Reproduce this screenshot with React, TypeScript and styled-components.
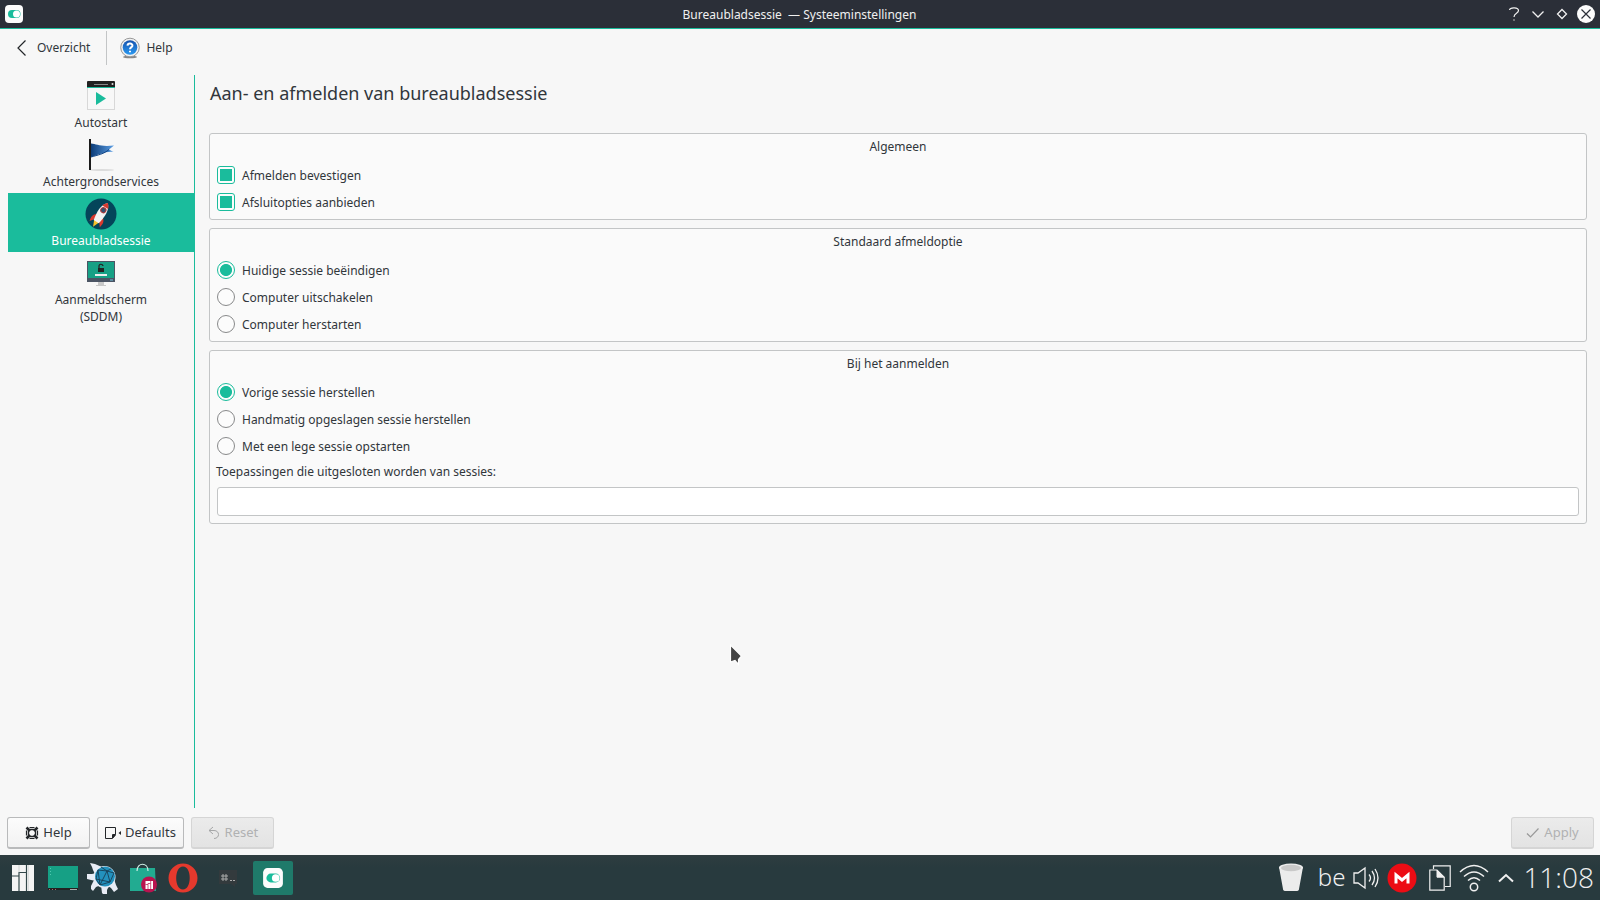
import React, { useState } from 'react';
import styled, { createGlobalStyle, css } from 'styled-components';

const accent = '#1abc9c';
const ink = '#31363b';

const GlobalStyle = createGlobalStyle`
  * { box-sizing: border-box; }
  body {
    margin: 0;
    background: #f7f7f7;
    color: ${ink};
    font: 12px/17px "Noto Sans", "Open Sans", sans-serif;
  }
  button, input { font: inherit; color: inherit; }
`;

const Desktop = styled.div`
  min-height: 100vh;
  display: flex;
  flex-direction: column;
`;

const TitleBar = styled.header`
  height: 29px;
  padding: 0 5px 0 4px;
  display: grid;
  grid-template-columns: 1fr auto 1fr;
  align-items: center;
  background: #2b2f38;
  color: #f0f0f0;
  border-bottom: 1px solid ${accent};
`;

const WindowTitle = styled.h1`
  margin: 0;
  font-size: 12px;
  font-weight: 400;
  white-space: pre;
`;

const WindowButtons = styled.div`
  display: flex;
  justify-content: flex-end;
  gap: 6px;
`;

const IconButton = styled.button`
  display: flex;
  width: 18px;
  height: 18px;
  padding: 0;
  border: 0;
  background: none;
`;

const ToolBar = styled.nav`
  height: 46px;
  padding: 1px 0 10px 16px;
  display: flex;
  align-items: center;
`;

const ToolButton = styled.button`
  height: 35px;
  padding: 0 16px 0 0;
  display: flex;
  align-items: center;
  gap: 6px;
  border: 0;
  background: none;
`;

const ToolSeparator = styled.span`
  width: 1px;
  height: 34px;
  margin-right: 13px;
  background: #c3c5c6;
`;

const Main = styled.div`
  flex: 1;
  display: flex;
`;

const SideBar = styled.nav`
  flex: 0 0 195px;
  padding-left: 8px;
  border-right: 1px solid ${accent};
`;

const SideItem = styled.a<{ $active?: boolean }>`
  min-height: 59px;
  padding: 5px 32px 3px;
  display: flex;
  flex-direction: column;
  align-items: center;
  gap: 2px;
  text-align: center;
  text-decoration: none;
  color: ${p => (p.$active ? '#fff' : ink)};
  background: ${p => (p.$active ? accent : 'transparent')};
`;

const Content = styled.main`
  flex: 1;
  padding: 0 13px 0 14px;
  display: flex;
  flex-direction: column;
  gap: 8px;
`;

const PageTitle = styled.h2`
  margin: 0;
  padding: 6px 0 20px 1px;
  font-size: 18px;
  line-height: 24px;
  font-weight: 400;
`;

const Group = styled.section<{ $roomy?: boolean }>`
  padding: 0 7px ${p => (p.$roomy ? 7 : 3)}px;
  border: 1px solid #c3c5c6;
  border-radius: 3px;
  background: #fafafa;
`;

const GroupTitle = styled.h3`
  margin: 0;
  height: 28px;
  font-size: 12px;
  line-height: 25px;
  font-weight: 400;
  text-align: center;
`;

const OptionRow = styled.label`
  height: 27px;
  padding-bottom: 1px;
  display: flex;
  align-items: center;
  gap: 7px;
`;

const Tick = styled.input`
  appearance: none;
  width: 18px;
  height: 18px;
  margin: 0;
  border: 1px solid #88898a;
  border-radius: ${p => (p.type === 'radio' ? '50%' : '3px')};
  background: #fcfcfc;
  ${p => css`
    &:checked {
      border-color: ${accent};
      background: ${p.type === 'radio'
        ? `radial-gradient(circle, ${accent} 5.6px, #fcfcfc 6.4px)`
        : `linear-gradient(${accent}, ${accent}) center / 12px 12px no-repeat #fcfcfc`};
    }
  `}
`;

const FieldLabel = styled.label`
  display: block;
  height: 24px;
  margin: 0 0 3px -1px;
  line-height: 24px;
`;

const TextField = styled.input`
  display: block;
  width: 100%;
  height: 29px;
  padding: 0 6px;
  border: 1px solid #c3c5c6;
  border-radius: 3px;
  background: #fff;
`;

const ActionBar = styled.footer`
  height: 47px;
  padding: 9px 6px 6px 7px;
  display: flex;
  gap: 7px;
`;

const PushButton = styled.button<{ $end?: boolean }>`
  height: 32px;
  min-width: 83px;
  padding: 0 7px;
  display: flex;
  align-items: center;
  justify-content: center;
  gap: 4px;
  margin-left: ${p => (p.$end ? 'auto' : '0')};
  border: 1px solid #b9babb;
  border-bottom-width: 2px;
  border-radius: 3px;
  background: linear-gradient(#fcfcfc, #f2f2f2);
  font-size: 13px;
  &:disabled {
    color: #b0b1b2;
    border-color: #d5d5d5;
    background: linear-gradient(#ebebeb, #e3e3e3);
  }
`;

const TaskBar = styled.footer`
  height: 45px;
  padding: 0 6px 0 3px;
  display: flex;
  align-items: center;
  justify-content: space-between;
  background: linear-gradient(#2f3d40, #283a3e 12px);
  color: #f0f0f0;
`;

const TaskList = styled.div`
  display: flex;
  align-items: center;
`;

const TaskButton = styled.button<{ $active?: boolean; $wide?: boolean }>`
  width: ${p => (p.$wide ? 50 : 40)}px;
  height: 34px;
  padding: 0;
  display: flex;
  align-items: center;
  justify-content: center;
  border: 0;
  border-radius: 2px;
  background: ${p => (p.$active ? '#1f7a6a' : 'transparent')};
`;

const Tray = styled.div`
  display: flex;
  align-items: center;
  gap: 8px;
`;

const Keyboard = styled.span`
  padding: 0 0 2px 6px;
  font: 350 24px/32px "Noto Sans", "Open Sans", sans-serif;
`;

const Clock = styled.time`
  padding-bottom: 2px;
  font: 350 28px/32px "Open Sans", "Noto Sans", sans-serif;
`;

const Pointer = styled.svg`
  position: absolute;
  left: 729px;
  top: 643px;
  pointer-events: none;
`;

const ToggleLogo = ({ size }: { size: number }) => (
  <svg width={size} height={size} viewBox="0 0 20 20">
    <rect x="1" y="1" width="18" height="18" rx="4" fill="#fcfcfc" />
    <rect x="4" y="6" width="12.500" height="8" rx="4" fill={accent} />
    <circle cx="12.500" cy="10" r="3.500" fill="#fff" />
  </svg>
);

const HelpBadge = () => (
  <svg width="20" height="22" viewBox="0 0 20 22">
    <defs>
      <linearGradient id="hb" x1="0" y1="0" x2="0" y2="1">
        <stop offset="0" stopColor="#1552ad" />
        <stop offset="1" stopColor="#2b9af2" />
      </linearGradient>
    </defs>
    <ellipse cx="10" cy="20" rx="7" ry="1.300" fill="#888" />
    <circle cx="10" cy="10.500" r="9.300" fill="#f1f1f1" stroke="#999" strokeWidth="1" />
    <circle cx="10" cy="10.500" r="7.300" fill="url(#hb)" />
    <path d="M7.500 8.600C7.700 5.800 12.800 6 12.400 8.800C12.200 10.200 10 10.200 10 12.300M10 13.700V15.300" fill="none" stroke="#fff" strokeWidth="2" />
  </svg>
);

const AutostartIcon = () => (
  <svg width="32" height="32" viewBox="0 0 32 32">
    <rect x="2.500" y="2.500" width="27" height="27" fill="#f8f8f8" stroke="#d8d8d8" />
    <path d="M2 2q0-1 1-1h26q1 0 1 1v5H2z" fill="#222" />
    <path d="M2 7.500h28" stroke={accent} />
    <path d="M9 4.500h14" stroke="#888" />
    <circle cx="27.500" cy="4" r="1" fill="#ddd" />
    <path d="M11 12l10 6.500L11 25z" fill={accent} />
  </svg>
);

const FlagIcon = () => (
  <svg width="32" height="32" viewBox="0 0 32 32">
    <defs>
      <linearGradient id="fl" x1="0" x2="1">
        <stop offset="0" stopColor="#0c3c78" />
        <stop offset="1" stopColor="#5b9fe6" />
      </linearGradient>
    </defs>
    <ellipse cx="17" cy="31" rx="12" ry="1" fill="#dcdcdc" />
    <path d="M5 0v31" stroke="#1b1b1b" strokeWidth="2" />
    <path d="M6 4.500C12 5 15 8 29 6.500L24 10.500L28.500 13C20 12 14 16 6 18z" fill="url(#fl)" />
    <path d="M6 18C13 16 19 15 24 10.500" fill="none" stroke="#0f4384" />
  </svg>
);

const RocketIcon = () => (
  <svg width="32" height="32" viewBox="0 0 32 32">
    <circle cx="16" cy="16" r="15.500" fill="#04455a" />
    <g transform="translate(16 16) rotate(32)">
      <path d="M-3 8L0 15L3 8z" fill="#f7c32b" />
      <path d="M-3 2C-7 4-7 8-6 12L-3 8zM3 2C7 4 7 8 6 12L3 8z" fill="#d8392f" />
      <path d="M0-13C5-8 5 0 3 9H-3C-5 0-5-8 0-13z" fill="#f3f3f3" />
      <path d="M0-13C2-11 3-9.500 3.400-8H-3.400C-3-9.500-2-11 0-13z" fill="#d8392f" />
      <circle cy="-4.500" r="2.600" fill="#34506e" stroke="#b0393c" strokeWidth="1" />
    </g>
  </svg>
);

const LoginIcon = () => (
  <svg width="32" height="32" viewBox="0 0 32 32">
    <rect x="2" y="4" width="28" height="21" fill="#4b5564" />
    <rect x="3" y="5" width="26" height="16" fill="#16a085" />
    <path d="M14 12V9.500a2 2 0 0 1 4-.5" fill="none" stroke="#222" strokeWidth="1.200" />
    <rect x="13" y="11" width="6" height="4" fill="#222" />
    <rect x="10" y="17" width="12" height="2" fill="#eee" />
    <path d="M25 23h3" stroke="#6fc3e0" />
    <path d="M13 25h6v3h2v1H11v-1h2z" fill="#c8c8c8" />
  </svg>
);

const LifeRing = () => (
  <svg width="14" height="14" viewBox="0 0 14 14" fill="none" stroke="#232629">
    <rect x="3.500" y="3.500" width="7" height="7" rx="2" strokeWidth="1.400" />
    <path d="M1.500 1.500L5 5M12.500 1.500L9 5M1.500 12.500L5 9M12.500 12.500L9 9" strokeWidth="2.600" />
    <path d="M4.500 1.500h5M4.500 12.500h5M1.500 4.500v5M12.500 4.500v5" strokeWidth="1.200" />
  </svg>
);

const DefaultsIcon = () => (
  <svg width="16" height="14" viewBox="0 0 16 14">
    <path d="M.5 1.500h10v7l-3 4h-7zM7.500 12v-3.500h3" fill="none" stroke="#232629" />
    <path d="M8 9h3l-3 3zM16 5v4l-2.500-2z" fill="#232629" />
  </svg>
);

const UndoIcon = () => (
  <svg width="14" height="14" viewBox="0 0 14 14" fill="none" stroke="#a5a6a7">
    <path d="M6 1L2 4.500L6 8M2 4.500h5c6 0 6 8 0 8" />
  </svg>
);

const CheckIcon = () => (
  <svg width="14" height="14" viewBox="0 0 14 14" fill="none" stroke="#999" strokeWidth="1.200">
    <path d="M1 7.500l3.500 3.500L12.500 2.500" />
  </svg>
);

const ManjaroIcon = () => (
  <svg width="24" height="28" viewBox="0 0 24 28">
    <path d="M1 1h22v26H1z" fill="#f4f4f4" />
    <path d="M1 12h7M8 27V8.500h7.500M15.500 1v26" fill="none" stroke="#33484a" strokeWidth="1.200" />
    <path d="M8 1v7.500" stroke="#b5bcbc" strokeWidth="0.600" />
    <path d="M17.500 1v26" stroke="#c9cfcf" strokeWidth="0.600" />
  </svg>
);

const DesktopIcon = () => (
  <svg width="32" height="26" viewBox="0 0 32 26">
    <rect x="1" y="1" width="30" height="22" fill="#16a085" />
    <rect x="1" y="23" width="30" height="2" fill="#222" />
    <path d="M2 24.500h7" stroke="#a66" strokeDasharray="1 2" />
    <path d="M23 24.500h7" stroke="#aaa" />
    <path d="M3.500 3v7" stroke="#4fc9b0" strokeDasharray="1 2" />
  </svg>
);

const GearGlobeIcon = () => (
  <svg width="32" height="32" viewBox="0 0 32 32">
    <g fill="#e8ecf5">
      <circle cx="17.500" cy="15" r="11" />
      <path d="M3 1l5 1 7 3-7 7-2-4-1-3zM0 12h5l4-1v8l-5-1-4-1zM4 24l4-8 6 7-5 2-3 4-2-2zM15 31l-1-8 8 1-2 4v4h-4zM24 26l-3-2 6-7 2 6 2 4-4 3z" />
    </g>
    <circle cx="18" cy="14.500" r="10" fill="#2391bd" />
    <path d="M11 8l9 1 7 2-4 9-10 3-4-6zM11 8l2 15M20 9l-7 14M20 9l3 11-14-3M14 5l6 4 4-2" fill="none" stroke="#173e56" strokeWidth="0.900" />
  </svg>
);

const BagIcon = () => (
  <svg width="28" height="30" viewBox="0 0 28 30">
    <path d="M1 5h25l1 23H1z" fill="#22ab91" />
    <path d="M8 8C8-1 19-1 19 8" fill="none" stroke="#cfeee6" strokeWidth="1.200" />
    <circle cx="20" cy="21.500" r="8" fill="#b9134f" />
    <path d="M16.500 18H24v8h-7.500z" fill="#fff" />
    <path d="M16.500 21.500h2.500M19 26v-5.500h2.500M21.700 18v8" fill="none" stroke="#b9134f" strokeWidth="0.700" />
  </svg>
);

const OperaIcon = () => (
  <svg width="30" height="30" viewBox="0 0 30 30">
    <path fillRule="evenodd" d="M15 .5a14.500 14.500 0 1 0 0 29a14.500 14.500 0 1 0 0-29zM15 3.500c9 0 9 23 0 23s-9-23 0-23z" fill="#e5392d" />
  </svg>
);

const TerminalIcon = () => (
  <svg width="20" height="20" viewBox="0 0 20 20">
    <path d="M1 2h18v14h-2v3l-4-3H1z" fill="#333a3d" />
    <path d="M5 6v7M8 6v7M3 8h7M3 11h7M12 12.500h2M15 12.500h2" stroke="#aaa" fill="none" />
  </svg>
);

const TrashIcon = () => (
  <svg width="26" height="30" viewBox="0 0 26 30">
    <path d="M1 4l4 22q0 2 3 2h10q3 0 3-2L25 4z" fill="#ececec" />
    <ellipse cx="13" cy="4.500" rx="12" ry="4" fill="#ececec" />
    <ellipse cx="13" cy="5" rx="10" ry="3.200" fill="#c9c9c9" />
  </svg>
);

const VolumeIcon = () => (
  <svg width="26" height="24" viewBox="0 0 26 24" fill="none" stroke="#f0f0f0" strokeWidth="1.300">
    <path d="M1 7h4l7-5v20l-7-5H1zM16 8.500q3 3.500 0 7M19 5q5 7 0 14M22 3q6 9 0 18" />
  </svg>
);

const MegaIcon = () => (
  <svg width="30" height="30" viewBox="0 0 30 30">
    <circle cx="15" cy="15" r="14.500" fill="#ec0c14" />
    <path d="M9 20.500V12l6 5 6-5v8.500" fill="none" stroke="#fff" strokeWidth="3" />
  </svg>
);

const ClipboardIcon = () => (
  <svg width="26" height="26" viewBox="-4 0 26 26" fill="none" stroke="#f0f0f0">
    <path d="M4.500 4V.8h16.700V21.500H16M.8 5h7.200l7.200 7.200V25.200H.8z" strokeWidth="1.200" />
    <path d="M8 5l7.200 7.200H8z" fill="#f0f0f0" />
  </svg>
);

const WifiIcon = () => (
  <svg width="30" height="28" viewBox="0 0 30 28" fill="none" stroke="#f0f0f0" strokeWidth="1.500">
    <circle cx="15" cy="23" r="3.700" />
    <path d="M1 8q14-13 28 0M5 12.500q10-9 20 0M9 16.500q6-5.500 12 0" />
  </svg>
);

const sideItems = [
  { label: 'Autostart', icon: <AutostartIcon /> },
  { label: 'Achtergrondservices', icon: <FlagIcon /> },
  { label: 'Bureaubladsessie', icon: <RocketIcon />, active: true },
  { label: 'Aanmeldscherm (SDDM)', icon: <LoginIcon /> },
];

const tasks = [
  { label: 'Menu', icon: <ManjaroIcon /> },
  { label: 'Bureaublad', icon: <DesktopIcon /> },
  { label: 'Browser', icon: <GearGlobeIcon /> },
  { label: 'Software', icon: <BagIcon /> },
  { label: 'Opera', icon: <OperaIcon /> },
  { label: 'Terminal', icon: <TerminalIcon />, wide: true },
];

function RadioGroup({ name, options }: { name: string; options: string[] }) {
  const [value, setValue] = useState(options[0]);
  return (
    <>
      {options.map(option => (
        <OptionRow key={option}>
          <Tick type="radio" name={name} checked={value === option} onChange={() => setValue(option)} />
          {option}
        </OptionRow>
      ))}
    </>
  );
}

export default function App() {
  return (
    <Desktop>
      <GlobalStyle />
      <TitleBar>
        <ToggleLogo size={20} />
        <WindowTitle>{'Bureaubladsessie  — Systeeminstellingen'}</WindowTitle>
        <WindowButtons>
          <IconButton aria-label="Help">
            <svg width="18" height="18" viewBox="0 0 18 18" fill="none" stroke="#f0f0f0">
              <path d="M4.500 5C5 2 13.500 2 13.500 5.500C13.500 8.500 9 8 9 12" strokeWidth="1.200" />
              <path d="M9 14v2" stroke="#888" strokeWidth="1.500" />
            </svg>
          </IconButton>
          <IconButton aria-label="Minimaliseren">
            <svg width="18" height="18" viewBox="0 0 18 18" fill="none" stroke="#f0f0f0" strokeWidth="1.300">
              <path d="M3.500 6.500L9 12l5.500-5.500" />
            </svg>
          </IconButton>
          <IconButton aria-label="Maximaliseren">
            <svg width="18" height="18" viewBox="0 0 18 18" fill="none" stroke="#f0f0f0" strokeWidth="1.300">
              <path d="M9 4.500L13.500 9L9 13.500L4.500 9z" />
            </svg>
          </IconButton>
          <IconButton aria-label="Sluiten">
            <svg width="18" height="18" viewBox="0 0 18 18">
              <circle cx="9" cy="9" r="9" fill="#fcfcfc" />
              <path d="M4.500 4.500l9 9M13.500 4.500l-9 9" stroke="#2b2f38" strokeWidth="1.200" />
            </svg>
          </IconButton>
        </WindowButtons>
      </TitleBar>

      <ToolBar>
        <ToolButton>
          <svg width="15" height="18" viewBox="0 0 15 18" fill="none" stroke="#232629" strokeWidth="1.200">
            <path d="M9.500 1.500L2 9l7.500 7.500" />
          </svg>
          Overzicht
        </ToolButton>
        <ToolSeparator />
        <ToolButton>
          <HelpBadge />
          Help
        </ToolButton>
      </ToolBar>

      <Main>
        <SideBar>
          {sideItems.map(item => (
            <SideItem key={item.label} href="#" $active={item.active}>
              {item.icon}
              {item.label}
            </SideItem>
          ))}
        </SideBar>
        <Content>
          <PageTitle>Aan- en afmelden van bureaubladsessie</PageTitle>
          <Group>
            <GroupTitle>Algemeen</GroupTitle>
            <OptionRow>
              <Tick type="checkbox" defaultChecked />
              Afmelden bevestigen
            </OptionRow>
            <OptionRow>
              <Tick type="checkbox" defaultChecked />
              Afsluitopties aanbieden
            </OptionRow>
          </Group>
          <Group>
            <GroupTitle>Standaard afmeldoptie</GroupTitle>
            <RadioGroup
              name="logout"
              options={['Huidige sessie beëindigen', 'Computer uitschakelen', 'Computer herstarten']}
            />
          </Group>
          <Group $roomy>
            <GroupTitle>Bij het aanmelden</GroupTitle>
            <RadioGroup
              name="login"
              options={[
                'Vorige sessie herstellen',
                'Handmatig opgeslagen sessie herstellen',
                'Met een lege sessie opstarten',
              ]}
            />
            <FieldLabel htmlFor="excluded">Toepassingen die uitgesloten worden van sessies:</FieldLabel>
            <TextField id="excluded" type="text" />
          </Group>
        </Content>
      </Main>

      <ActionBar>
        <PushButton><LifeRing />Help</PushButton>
        <PushButton><DefaultsIcon />Defaults</PushButton>
        <PushButton disabled><UndoIcon />Reset</PushButton>
        <PushButton disabled $end><CheckIcon />Apply</PushButton>
      </ActionBar>

      <TaskBar>
        <TaskList>
          {tasks.map(task => (
            <TaskButton key={task.label} aria-label={task.label} $wide={task.wide}>{task.icon}</TaskButton>
          ))}
          <TaskButton $active aria-label="Systeeminstellingen"><ToggleLogo size={22} /></TaskButton>
        </TaskList>
        <Tray>
          <TrashIcon />
          <Keyboard>be</Keyboard>
          <VolumeIcon />
          <MegaIcon />
          <ClipboardIcon />
          <WifiIcon />
          <svg width="18" height="10" viewBox="0 0 18 10" fill="none" stroke="#f0f0f0" strokeWidth="2">
            <path d="M2 8.500L9 2l7 6.500" />
          </svg>
          <Clock>11:08</Clock>
        </Tray>
      </TaskBar>

      <Pointer width="14" height="24" viewBox="0 0 14 24">
        <path d="M1.500 2v17l4.500-1.500L9.500 21.500V16.500L12.500 13z" fill="#444" stroke="#fff" strokeWidth="1.200" />
      </Pointer>
    </Desktop>
  );
}
